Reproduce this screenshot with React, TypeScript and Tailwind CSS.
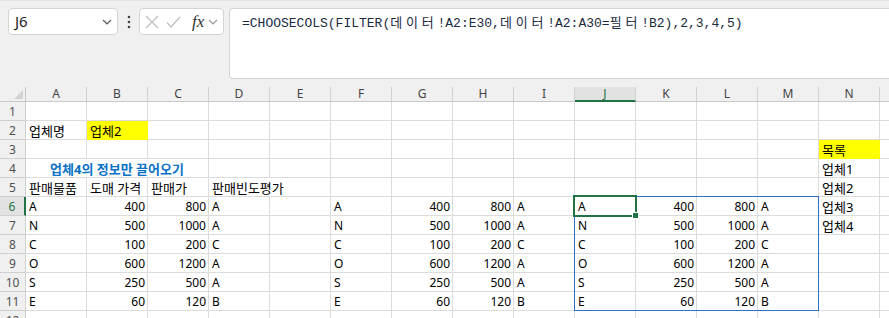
import React from "react";

type Cell = { t?: string; r?: boolean; yellow?: boolean; span?: number; title?: boolean };

const COLS = ["A", "B", "C", "D", "E", "F", "G", "H", "I", "J", "K", "L", "M", "N", "O"];

const prod = ["A", "N", "C", "O", "S", "E"];
const wholesale = ["400", "500", "100", "600", "250", "60"];
const price = ["800", "1000", "200", "1200", "500", "120"];
const grade = ["A", "A", "C", "A", "A", "B"];

function buildRows(): Record<string, Cell>[] {
  const rows: Record<string, Cell>[] = [];
  for (let i = 0; i < 12; i++) rows.push({});
  rows[1]["A"] = { t: "업체명" };
  rows[1]["B"] = { t: "업체2", yellow: true };
  rows[2]["N"] = { t: "목록", yellow: true };
  rows[3]["A"] = { t: "업체4의 정보만 끌어오기", span: 3, title: true };
  rows[3]["N"] = { t: "업체1" };
  rows[4]["A"] = { t: "판매물품" };
  rows[4]["B"] = { t: "도매 가격" };
  rows[4]["C"] = { t: "판매가" };
  rows[4]["D"] = { t: "판매빈도평가", span: 2 };
  rows[4]["N"] = { t: "업체2" };
  rows[5]["N"] = { t: "업체3" };
  rows[6]["N"] = { t: "업체4" };
  for (let i = 0; i < 6; i++) {
    const r = rows[5 + i];
    const groups = [
      ["A", "B", "C", "D"],
      ["F", "G", "H", "I"],
      ["J", "K", "L", "M"],
    ];
    for (const g of groups) {
      r[g[0]] = { t: prod[i] };
      r[g[1]] = { t: wholesale[i], r: true };
      r[g[2]] = { t: price[i], r: true };
      r[g[3]] = { t: grade[i] };
    }
  }
  return rows;
}

const widthCls: Record<number, string> = {
  1: "w-[61px]",
  2: "w-[122px]",
  3: "w-[183px]",
};

const hangul = /[\uac00-\ud7a3]/;

function SheetRow({ idx, cells }: { idx: number; cells: Record<string, Cell> }) {
  const out: React.ReactNode[] = [];
  let c = 0;
  while (c < COLS.length) {
    const col = COLS[c];
    const cell = cells[col] || {};
    const span = cell.span || 1;
    const isKr = cell.t ? hangul.test(cell.t) : false;
    let cls =
      "h-[19px] shrink-0 border-r border-b whitespace-nowrap leading-[20px] overflow-visible " +
      widthCls[span];
    cls += isKr ? " text-[13px]" : " text-[12px]";
    if (cell.yellow) cls += " bg-[#ffff00] border-[#ffff00] text-black pl-[3px]";
    else cls += " border-[#dcdcdc]";
    if (cell.title) cls += " text-center font-bold text-[#0a72c6]";
    else if (cell.r) cls += " text-right pr-[2px] text-black";
    else cls += " pl-[3px] text-black";
    out.push(
      <div key={col} className={cls}>
        {cell.t}
      </div>
    );
    c += span;
  }
  const active = idx === 6;
  return (
    <div className="flex">
      <div
        className={
          active
            ? "w-[26px] h-[19px] shrink-0 border-b border-[#d0d0d0] border-r-2 border-r-[#217346] bg-[#e2e2e2] text-center text-[12px] leading-[20px] text-[#217346]"
            : "w-[26px] h-[19px] shrink-0 border-r border-b border-[#d0d0d0] bg-[#f0f0f0] text-center text-[12px] leading-[20px] text-[#505050]"
        }
      >
        {idx}
      </div>
      {out}
    </div>
  );
}

function XIcon() {
  return (
    <svg width="14" height="14" viewBox="0 0 14 14" fill="none">
      <path d="M1 1 L13 13 M13 1 L1 13" stroke="#bdbdbd" strokeWidth="1.2" />
    </svg>
  );
}

function CheckIcon() {
  return (
    <svg width="15" height="14" viewBox="0 0 15 14" fill="none">
      <path d="M1 7.5 L5 12 L14 2" stroke="#bdbdbd" strokeWidth="1.2" />
    </svg>
  );
}

function Chevron({ color = "#555" }: { color?: string }) {
  return (
    <svg width="10" height="6" viewBox="0 0 10 6" fill="none">
      <path d="M1 1 L5 5 L9 1" stroke={color} strokeWidth="1.2" />
    </svg>
  );
}

function Kr({ children }: { children: React.ReactNode }) {
  return <span className="font-['Noto_Sans_CJK_KR',sans-serif] tracking-[3.8px]">{children}</span>;
}

export default function App() {
  const rows = buildRows();
  return (
    <div className="w-[889px] h-[318px] overflow-hidden bg-[#f0f0f0] font-['Noto_Sans','Noto_Sans_CJK_KR',sans-serif]">
      {/* Formula bar */}
      <div className="h-[87px] flex items-start pt-[7px] pl-[8px] border-t border-[#e2e2e2]">
        <div className="w-[110px] h-[27px] bg-white border border-[#d4d4d4] rounded-[4px] flex items-center justify-between pl-[6px] pr-[5px] shrink-0">
          <span className="text-[15px] text-[#222] leading-none">J6</span>
          <Chevron />
        </div>
        <div className="w-[21px] h-[27px] flex items-center justify-center shrink-0">
          <svg width="4" height="14" viewBox="0 0 4 14">
            <circle cx="2" cy="2" r="1.3" fill="#444" />
            <circle cx="2" cy="7" r="1.3" fill="#444" />
            <circle cx="2" cy="12" r="1.3" fill="#444" />
          </svg>
        </div>
        <div className="w-[85px] h-[27px] bg-white border border-[#d4d4d4] rounded-[4px] flex items-center pl-[5px] shrink-0">
          <XIcon />
          <div className="w-[7px]" />
          <CheckIcon />
          <div className="w-[11px]" />
          <span className="font-['Liberation_Serif',serif] italic text-[17px] text-[#333] leading-none">fx</span>
          <div className="w-[4px]" />
          <Chevron color="#999" />
        </div>
        <div className="ml-[5px] flex-1 h-[71px] bg-white border border-r-0 border-[#d4d4d4] rounded-l-[4px] pl-[12px] pt-[4px]">
          <div className="font-['Liberation_Mono','Noto_Sans_CJK_KR',monospace] text-[13px] leading-[18px] text-[#1b2a41] whitespace-nowrap">
            =CHOOSECOLS(FILTER(<Kr>데이터</Kr>!A2:E30,<Kr>데이터</Kr>!A2:A30=<Kr>필터</Kr>!B2),2,3,4,5)
          </div>
        </div>
      </div>

      {/* Grid */}
      <div className="relative bg-white">
        <div className="flex bg-[#f0f0f0]">
          <div className="w-[26px] h-[15px] shrink-0 border-r border-b border-[#c8c8c8] flex items-end justify-end pr-[2px] pb-[2px]">
            <svg width="9" height="9" viewBox="0 0 9 9">
              <path d="M9 0 L9 9 L0 9 Z" fill="#d2d2d2" />
            </svg>
          </div>
          {COLS.map((c) =>
            c === "J" ? (
              <div
                key={c}
                className="w-[61px] h-[15px] shrink-0 border-r border-[#d0d0d0] border-b-2 border-b-[#217346] bg-[#e2e2e2] text-center text-[12px] leading-[14px] text-[#217346]"
              >
                {c}
              </div>
            ) : (
              <div
                key={c}
                className="w-[61px] h-[15px] shrink-0 border-r border-b border-[#d0d0d0] border-b-[#c8c8c8] text-center text-[12px] leading-[14px] text-[#444]"
              >
                {c}
              </div>
            )
          )}
        </div>
        {rows.map((r, i) => (
          <SheetRow key={i} idx={i + 1} cells={r} />
        ))}

        {/* Selected range outline */}
        <div className="absolute left-[574px] top-[109px] w-[245px] h-[115px] border border-[#2f6fce] pointer-events-none" />
        {/* Active cell */}
        <div className="absolute left-[573px] top-[108px] w-[64px] h-[22px] border-2 border-[#217346] pointer-events-none" />
        <div className="absolute left-[632px] top-[125px] w-[7px] h-[7px] bg-[#217346] border border-white pointer-events-none" />
      </div>
    </div>
  );
}
